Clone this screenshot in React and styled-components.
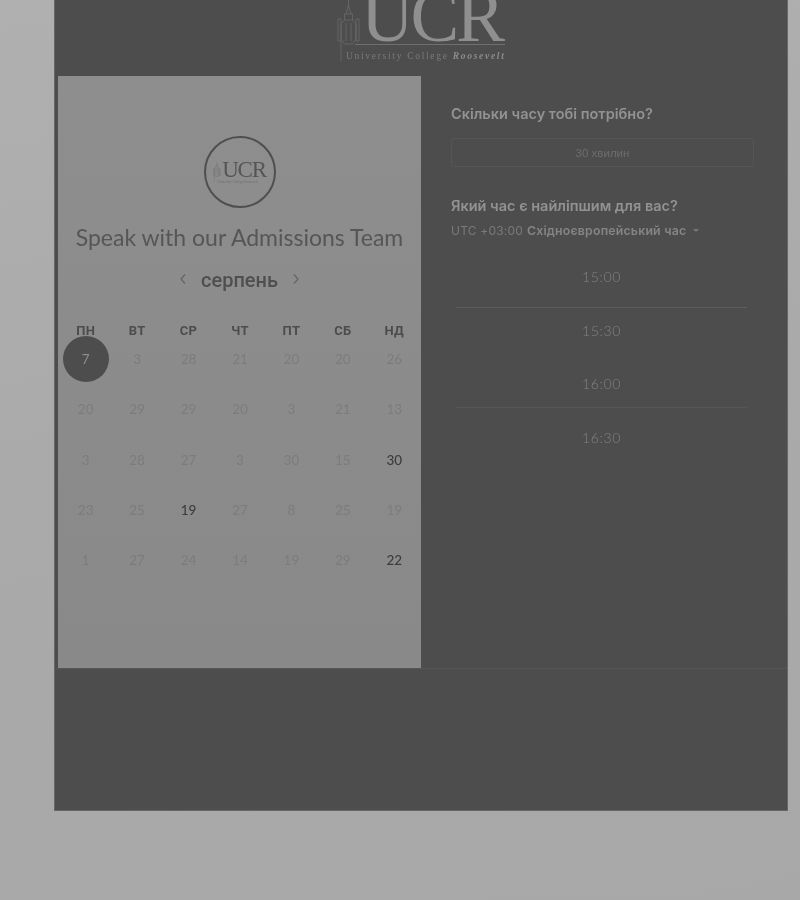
import React from 'react'
import styled, { createGlobalStyle } from 'styled-components'

const weekDays = ['ПН', 'ВТ', 'СР', 'ЧТ', 'ПТ', 'СБ', 'НД']

const weeks = [
    [7, 3, 28, 21, 20, 20, 26],
    [20, 29, 29, 20, 3, 21, 13],
    [3, 28, 27, 3, 30, 15, 30],
    [23, 25, 19, 27, 8, 25, 19],
    [1, 27, 24, 14, 19, 29, 22],
]

// week index + day index of the days that can be booked
const available = ['2-6', '3-2', '4-6']

const slots = [
    { time: '15:00', line: 'strong', lineAt: -4 },
    { time: '15:30' },
    { time: '16:00', line: 'faint', lineAt: 3 },
    { time: '16:30' },
]

const Tower = ({ color = '#6f6f6f', width = 24, height = 62 }) => (
    <svg width={width} height={height} viewBox="0 0 24 62" fill="none" stroke={color} strokeWidth="0.7">
        <path d="M11.5 0V8M9 15L11.5 6L14 15M7.5 21V15H15.5V21" />
        <path d="M4 25L7.5 21H15.5L19 25V40L15.5 45H7.5L4 40Z" />
        <path d="M1 20H4V42H1ZM19 20H22V42H19ZM9 24V42M14 24V42" />
        <path d="M4 42V62" />
    </svg>
)

const App = () => {
    return (
        <Page>
            <GlobalStyle />
            <Card>
                <Header>
                    <Logo>
                        <LogoTower><Tower /></LogoTower>
                        <LogoLetters>UCR</LogoLetters>
                        <LogoCaption>
                            University College <em>Roosevelt</em>
                        </LogoCaption>
                    </Logo>
                </Header>
                <Body>
                    <CalendarPanel>
                        <Badge>
                            <Tower color="#5c5c5c" width={8} height={20} />
                            <BadgeLetters>UCR</BadgeLetters>
                            <BadgeCaption>University College Roosevelt</BadgeCaption>
                        </Badge>
                        <Title>Speak with our Admissions Team</Title>
                        <MonthRow>
                            <Chevron viewBox="0 0 8 12">
                                <path d="M6 1.5L2 6L6 10.5" />
                            </Chevron>
                            <Month>серпень</Month>
                            <Chevron viewBox="0 0 8 12">
                                <path d="M2 1.5L6 6L2 10.5" />
                            </Chevron>
                        </MonthRow>
                        <WeekHead>
                            {weekDays.map(day => <WeekDay key={day}>{day}</WeekDay>)}
                        </WeekHead>
                        <Days>
                            {weeks.map((week, w) => week.map((day, d) => (
                                <Day key={w + '-' + d}>
                                    <DayNumber
                                        $selected={w === 0 && d === 0}
                                        $active={available.includes(w + '-' + d)}
                                    >
                                        {day}
                                    </DayNumber>
                                </Day>
                            )))}
                        </Days>
                    </CalendarPanel>
                    <TimePanel>
                        <Question>Скільки часу тобі потрібно?</Question>
                        <Duration>30 хвилин</Duration>
                        <Question>Який час є найліпшим для вас?</Question>
                        <Zone>
                            <span>UTC +03:00</span>
                            <ZoneName>Східноєвропейський час</ZoneName>
                            <Caret />
                        </Zone>
                        <Slots>
                            {slots.map(slot => (
                                <Slot key={slot.time} $line={slot.line} $lineAt={slot.lineAt}>{slot.time}</Slot>
                            ))}
                        </Slots>
                    </TimePanel>
                </Body>
                <Footer />
            </Card>
        </Page>
    )
}

export default App

const GlobalStyle = createGlobalStyle`
    html, body {
        margin: 0;
        padding: 0;
        background: #a9a9a9;
    }
`

const Page = styled.div`
    width: 800px;
    height: 900px;
    padding: 0 12px 0 54px;
    box-sizing: border-box;
    overflow: hidden;
    background: linear-gradient(170deg, #b0b0b0 0%, #aaaaaa 45%, #a8a8a8 100%);
`

const Card = styled.div`
    height: 811px;
    display: flex;
    flex-direction: column;
    background: #4d4d4d;
    border-left: 1px solid #666;
    border-right: 1px solid #666;
    border-bottom: 1px solid #666;
    box-sizing: border-box;
    filter: blur(0.35px);
`

const Header = styled.header`
    height: 76px;
    flex: none;
    display: flex;
    justify-content: center;
    overflow: hidden;
`

const Logo = styled.div`
    position: relative;
    width: 159px;
    padding-left: 9px;
    display: flex;
    flex-direction: column;
`

const LogoTower = styled.div`
    position: absolute;
    left: 0;
    top: -1px;
`

const LogoLetters = styled.div`
    height: 51px;
    margin: -6px 0 0 9px;
    padding-right: 3px;
    border-bottom: 1px solid #6f6f6f;
    box-sizing: border-box;
    font-family: "Liberation Serif", serif;
    font-size: 73px;
    line-height: 46px;
    letter-spacing: -3px;
    color: #8f8f8f;
    text-align: right;
`

const LogoCaption = styled.div`
    font-family: "Liberation Serif", serif;
    font-size: 9.5px;
    line-height: 12px;
    margin-top: 5px;
    letter-spacing: 1.7px;
    color: #7a7a7a;
    white-space: nowrap;
    em {
        font-weight: bold;
        color: #8c8c8c;
    }
`

const Body = styled.main`
    height: 592px;
    flex: none;
    display: flex;
    padding-left: 3px;
    border-bottom: 1px solid #565656;
`

const CalendarPanel = styled.section`
    width: 363px;
    flex: none;
    box-sizing: border-box;
    padding: 60px 1px 0;
    display: flex;
    flex-direction: column;
    align-items: center;
    background: linear-gradient(180deg, #8e8e8e 0%, #898989 100%);
`

const Badge = styled.div`
    position: relative;
    width: 72px;
    height: 72px;
    box-sizing: border-box;
    border: 2px solid #4f4f4f;
    border-radius: 50%;
    display: flex;
    align-items: center;
    justify-content: center;
    gap: 1px;
`

const BadgeLetters = styled.span`
    font-family: "Liberation Serif", serif;
    font-size: 23px;
    line-height: 20px;
    letter-spacing: -1.2px;
    color: #555;
    margin-top: -4px;
`

const BadgeCaption = styled.span`
    position: absolute;
    left: 12px;
    top: 42px;
    font-family: "Liberation Serif", serif;
    font-size: 3.4px;
    line-height: 4px;
    white-space: nowrap;
    color: #6e6e6e;
`

const Title = styled.h1`
    margin: 14px 0 0;
    font-family: Lato, sans-serif;
    font-size: 23px;
    font-weight: 400;
    line-height: 30px;
    color: #565656;
    white-space: nowrap;
`

const MonthRow = styled.div`
    display: flex;
    align-items: center;
    justify-content: center;
    gap: 14px;
    height: 30px;
    margin-top: 13px;
`

const Month = styled.span`
    font-family: Roboto, sans-serif;
    font-size: 20px;
    font-weight: 500;
    color: #4f4f4f;
`

const Chevron = styled.svg`
    width: 8px;
    height: 12px;
    fill: none;
    stroke: #666;
    stroke-width: 1.3;
    margin-top: -2px;
`

const WeekHead = styled.div`
    width: 100%;
    display: grid;
    grid-template-columns: repeat(7, 1fr);
    margin-top: 28px;
    padding-left: 1px;
    box-sizing: border-box;
`

const WeekDay = styled.span`
    font-family: Roboto, sans-serif;
    font-size: 13px;
    font-weight: 700;
    line-height: 16px;
    text-align: center;
    letter-spacing: 0.3px;
    color: #4c4c4c;
`

const Days = styled.div`
    width: 100%;
    display: grid;
    grid-template-columns: repeat(7, 1fr);
    grid-auto-rows: 50.25px;
    margin-top: -5px;
    padding-left: 1px;
    box-sizing: border-box;
`

const Day = styled.div`
    display: flex;
    align-items: center;
    justify-content: center;
`

const DayNumber = styled.span`
    width: 46px;
    height: 46px;
    border-radius: 50%;
    display: flex;
    align-items: center;
    justify-content: center;
    font-family: Lato, sans-serif;
    font-size: 13.5px;
    color: ${props => props.$selected ? '#8c8c8c' : props.$active ? '#3c3c3c' : '#7c7c7c'};
    background: ${props => props.$selected ? '#4d4d4d' : 'transparent'};
    font-weight: ${props => props.$active ? 500 : 400};
`

const TimePanel = styled.section`
    flex: 1;
    padding: 28px 33px 0 30px;
    box-sizing: border-box;
`

const Question = styled.h2`
    margin: 0;
    font-family: Inter, sans-serif;
    font-size: 14.5px;
    font-weight: 600;
    line-height: 20px;
    color: #929292;
    white-space: nowrap;
`

const Duration = styled.div`
    height: 29px;
    margin: 14px 0 29px;
    border: 1px solid #555;
    border-radius: 2px;
    box-sizing: border-box;
    display: flex;
    align-items: center;
    justify-content: center;
    font-family: "Liberation Sans", sans-serif;
    font-size: 11.5px;
    color: #6d6d6d;
`

const Zone = styled.div`
    display: flex;
    align-items: center;
    gap: 4px;
    height: 18px;
    margin-top: 5px;
    font-family: Inter, sans-serif;
    font-size: 12px;
    letter-spacing: 0.2px;
    color: #7a7a7a;
    white-space: nowrap;
`

const ZoneName = styled.span`
    font-size: 12.3px;
    font-weight: 600;
    color: #858585;
`

const Caret = styled.i`
    width: 0;
    height: 0;
    margin-left: 3px;
    border-left: 3px solid transparent;
    border-right: 3px solid transparent;
    border-top: 3px solid #777;
`

const Slots = styled.div`
    margin-top: 11px;
    padding: 0 7px 0 5px;
`

const Slot = styled.div`
    position: relative;
    height: 53.6px;
    display: flex;
    align-items: center;
    justify-content: center;
    font-family: Lato, sans-serif;
    font-size: 14px;
    font-weight: 300;
    letter-spacing: 0.6px;
    color: #828282;
    &::after {
        content: '';
        display: ${props => props.$line ? 'block' : 'none'};
        position: absolute;
        left: 0;
        right: 0;
        bottom: ${props => props.$lineAt}px;
        height: 1px;
        background: ${props => props.$line === 'strong' ? '#5c5c5c' : '#565656'};
    }
`

const Footer = styled.footer`
    flex: 1;
`
